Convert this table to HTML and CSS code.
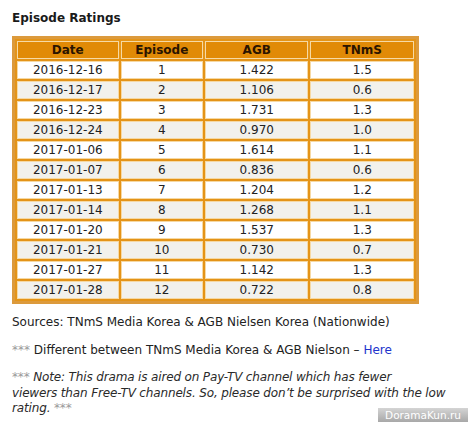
FILE: index.html
```html
<!DOCTYPE html>
<html lang="en">
<head>
    <meta charset="utf-8">
    <link rel="stylesheet" href="styles.css">
</head>
<body>
    <h3 class="title">Episode Ratings</h3>
    <table class="ratings">
        <tr><th class="col-date">Date</th><th class="col-ep">Episode</th><th class="col-agb">AGB</th><th class="col-tnms">TNmS</th></tr>
        <tr><td>2016-12-16</td><td>1</td><td>1.422</td><td>1.5</td></tr>
        <tr><td>2016-12-17</td><td>2</td><td>1.106</td><td>0.6</td></tr>
        <tr><td>2016-12-23</td><td>3</td><td>1.731</td><td>1.3</td></tr>
        <tr><td>2016-12-24</td><td>4</td><td>0.970</td><td>1.0</td></tr>
        <tr><td>2017-01-06</td><td>5</td><td>1.614</td><td>1.1</td></tr>
        <tr><td>2017-01-07</td><td>6</td><td>0.836</td><td>0.6</td></tr>
        <tr><td>2017-01-13</td><td>7</td><td>1.204</td><td>1.2</td></tr>
        <tr><td>2017-01-14</td><td>8</td><td>1.268</td><td>1.1</td></tr>
        <tr><td>2017-01-20</td><td>9</td><td>1.537</td><td>1.3</td></tr>
        <tr><td>2017-01-21</td><td>10</td><td>0.730</td><td>0.7</td></tr>
        <tr><td>2017-01-27</td><td>11</td><td>1.142</td><td>1.3</td></tr>
        <tr><td>2017-01-28</td><td>12</td><td>0.722</td><td>0.8</td></tr>
    </table>
    <p class="note">Sources: TNmS Media Korea &amp; AGB Nielsen Korea (Nationwide)</p>
    <p class="note"><span class="stars">***</span> Different between TNmS Media Korea &amp; AGB Nielson – <a href="#">Here</a></p>
    <p class="note remark"><em><span class="stars">***</span> Note: This drama is aired on Pay-TV channel which has fewer<br>viewers than Free-TV channels. So, please don’t be surprised with the low<br>rating. <span class="stars">***</span></em></p>
    <div class="watermark">DoramaKun.ru</div>
</body>
</html>
```

FILE: styles.css
```css
body {
    margin: 0;
    padding: 0 0 0 12px;
    background: #fff;
    color: #222;
    font-family: "DejaVu Sans", Verdana, sans-serif;
    font-size: 12px;
    position: relative;
    height: 424px;
    box-sizing: border-box;
    overflow: hidden;
}

.title {
    margin: 0;
    padding-top: 11px;
    height: 25px;
    font-size: 12px;
    font-weight: bold;
    color: #1a1a1a;
}

.ratings {
    width: 407px;
    border: 3px solid #dc9a3c;
    border-spacing: 2px;
    background: #e49418;
    table-layout: fixed;
}

.ratings th,
.ratings td {
    height: 16px;
    padding: 0;
    border: 1px solid #f6d9a4;
    text-align: center;
    font-size: 12px;
    line-height: 16px;
}

.ratings th {
    background: #e18a06;
    color: #2a1400;
    font-weight: bold;
}

.ratings td {
    background: #fff;
    color: #222;
}

.ratings tr:nth-child(odd) td {
    background: #f2f1ec;
}

.col-date { width: 26%; }
.col-ep { width: 21%; }
.col-agb { width: 26.5%; }
.col-tnms { width: 26.5%; }

.note {
    margin: 11px 0 0;
    font-size: 12px;
    line-height: 15.5px;
    color: #222;
}

.note + .note {
    margin-top: 12px;
}

.remark {
    white-space: nowrap;
    letter-spacing: -0.15px;
}

.note em {
    color: #2a2a2a;
}

.stars {
    color: #999;
}

.note a {
    color: #2233cc;
    text-decoration: none;
}

.watermark {
    position: absolute;
    right: 0;
    bottom: 2px;
    width: 90px;
    height: 14px;
    line-height: 14px;
    text-align: center;
    font-family: "DejaVu Sans", sans-serif;
    font-size: 10.5px;
    color: #fff;
    background: linear-gradient(#d4d4d4, #a8a8a8);
}
```
